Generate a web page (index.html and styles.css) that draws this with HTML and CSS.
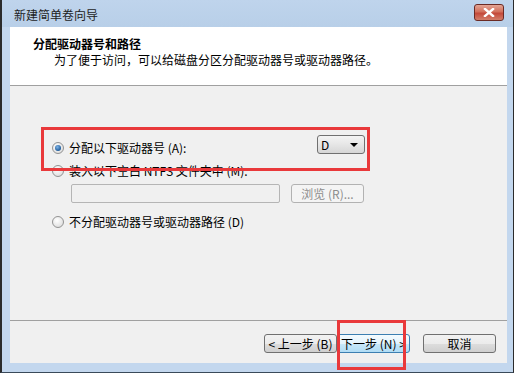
FILE: index.html
```html
<!DOCTYPE html>
<html lang="zh-CN">
<head>
  <meta charset="UTF-8">
  <meta name="viewport" content="width=device-width, initial-scale=1.0">
  <title>新建简单卷向导</title>
  <link rel="stylesheet" href="styles.css">
</head>
<body>
  <div class="window">
    <div class="titlebar">
      <span class="title">新建简单卷向导</span>
      <button class="close-btn" aria-label="关闭">
        <svg width="12" height="9" viewBox="0 0 12 9">
          <path d="M2 1 L10 8 M10 1 L2 8" stroke="#fff" stroke-width="2.4" stroke-linecap="square"/>
        </svg>
      </button>
    </div>

    <div class="client">
      <div class="wizard-header">
        <div class="header-title">分配驱动器号和路径</div>
        <div class="header-desc">为了便于访问，可以给磁盘分区分配驱动器号或驱动器路径。</div>
      </div>

      <div class="wizard-body">
        <div class="options">
          <div class="option first">
            <span class="radio checked"></span>
            <span class="label">分配以下驱动器号 (A):</span>
            <div class="drive-select">
              <span>D</span>
              <span class="arrow"></span>
            </div>
          </div>
          <div class="option">
            <span class="radio"></span>
            <span class="label">装入以下空白 NTFS 文件夹中 (M):</span>
          </div>
          <div class="folder-row">
            <div class="text-field"></div>
            <button class="btn disabled">浏览 (R)...</button>
          </div>
          <div class="option last">
            <span class="radio"></span>
            <span class="label">不分配驱动器号或驱动器路径 (D)</span>
          </div>
        </div>
      </div>

      <div class="wizard-footer">
        <button class="btn">&lt; 上一步 (B)</button>
        <button class="btn default">下一步 (N) &gt;</button>
        <button class="btn cancel">取消</button>
      </div>
    </div>
    <div class="bottom-frame"></div>

    <!-- 标注框 -->
    <div class="mark mark-drive"></div>
    <div class="mark mark-next"></div>
  </div>
</body>
</html>
```

FILE: styles.css
```css
* {
  margin: 0;
  padding: 0;
  box-sizing: border-box;
  font-family: "Noto Sans CJK SC", "Liberation Sans", sans-serif;
}

body {
  background: #fff;
  width: 517px;
  height: 374px;
  overflow: hidden;
}

.window {
  position: relative;
  width: 514px;
  height: 373px;
  background: #c3d7ee;
  border-left: 2px solid #2b2b2b;
  border-right: 1px solid #2b2b2b;
  border-bottom: 1px solid #3a4a5a;
  display: flex;
  flex-direction: column;
}

.titlebar {
  height: 27px;
  display: flex;
  align-items: center;
  justify-content: space-between;
  padding: 0 9px 0 12px;
  background: linear-gradient(#bfd4ec, #b8cfe8);
}

.title {
  font-size: 12px;
  color: #1e1e1e;
  margin-top: 2px;
}

.close-btn {
  width: 30px;
  height: 17px;
  margin-top: -3px;
  border: 1px solid #6b2a24;
  border-radius: 3px;
  background: linear-gradient(#e4a595, #d2705c 45%, #c4493a 55%, #d27e6a);
  display: flex;
  align-items: center;
  justify-content: center;
}

.client {
  margin: 0 6px 0 8px;
  height: 336px;
  background: #f0f0f0;
  display: flex;
  flex-direction: column;
}

.wizard-header {
  height: 59px;
  background: #fff;
  border-bottom: 1px solid #a0a0a0;
  padding: 9px 0 0 23px;
  font-size: 12px;
  color: #000;
}

.header-title {
  font-weight: bold;
  line-height: 16px;
}

.header-desc {
  line-height: 16px;
  padding-left: 21px;
}

.wizard-body {
  height: 235px;
  border-bottom: 1px solid #a0a0a0;
  padding: 53px 0 0 42px;
}

.options {
  width: 313px;
  font-size: 12px;
  color: #000;
}

.option {
  display: flex;
  align-items: center;
  height: 18px;
  margin-bottom: 5px;
}

.option.last {
  margin-top: 10px;
}

.label {
  margin-left: 5px;
  line-height: 18px;
}

.radio {
  width: 12px;
  height: 12px;
  border-radius: 50%;
  border: 1px solid #939393;
  background: radial-gradient(circle at 40% 35%, #ffffff, #e2e2e2 70%, #cfcfcf);
  display: flex;
  align-items: center;
  justify-content: center;
}

.radio.checked::after {
  content: "";
  width: 6px;
  height: 6px;
  border-radius: 50%;
  background: radial-gradient(circle at 40% 35%, #7fb4e6, #1f5c9c 70%, #0f3e73);
}

.drive-select {
  margin-left: auto;
  margin-top: -7px;
  width: 48px;
  height: 19px;
  border: 1px solid #707070;
  border-radius: 3px;
  background: linear-gradient(#f4f4f4, #e6e6e6 50%, #d6d6d6);
  display: flex;
  align-items: center;
  justify-content: space-between;
  padding: 0 6px 0 3px;
  font-family: "Liberation Mono", monospace;
  font-size: 12px;
}

.arrow {
  width: 0;
  height: 0;
  border-left: 4px solid transparent;
  border-right: 4px solid transparent;
  border-top: 4px solid #000;
}

.folder-row {
  display: flex;
  align-items: center;
  margin: -1px 0 0 19px;
}

.text-field {
  width: 209px;
  height: 19px;
  border: 1px solid #b5b5b5;
  border-radius: 2px;
  background: #f0f0f0;
}

.btn {
  width: 73px;
  height: 19px;
  font-size: 12px;
  color: #000;
  border: 1px solid #707070;
  border-radius: 3px;
  background: linear-gradient(#f2f2f2, #ebebeb 50%, #dddddd 51%, #cfcfcf);
  display: flex;
  align-items: center;
  justify-content: center;
  white-space: nowrap;
}

.btn.disabled {
  margin-left: 11px;
  color: #8d8d8d;
  border-color: #b2b2b2;
  background: #f4f4f4;
}

.wizard-footer {
  display: flex;
  justify-content: flex-end;
  padding: 13px 11px 0 0;
}

.btn.default {
  border-color: #3c7fb1;
  background: linear-gradient(#f4fbfe, #e3f3fc 50%, #c8e8f9 51%, #b0dcf5);
}

.btn.cancel {
  margin-left: 13px;
}

.mark {
  position: absolute;
  border: 3px solid #e9393b;
}

.mark-drive {
  left: 39px;
  top: 127px;
  width: 329px;
  height: 44px;
}

.mark-next {
  left: 335px;
  top: 320px;
  width: 69px;
  height: 50px;
}
```
